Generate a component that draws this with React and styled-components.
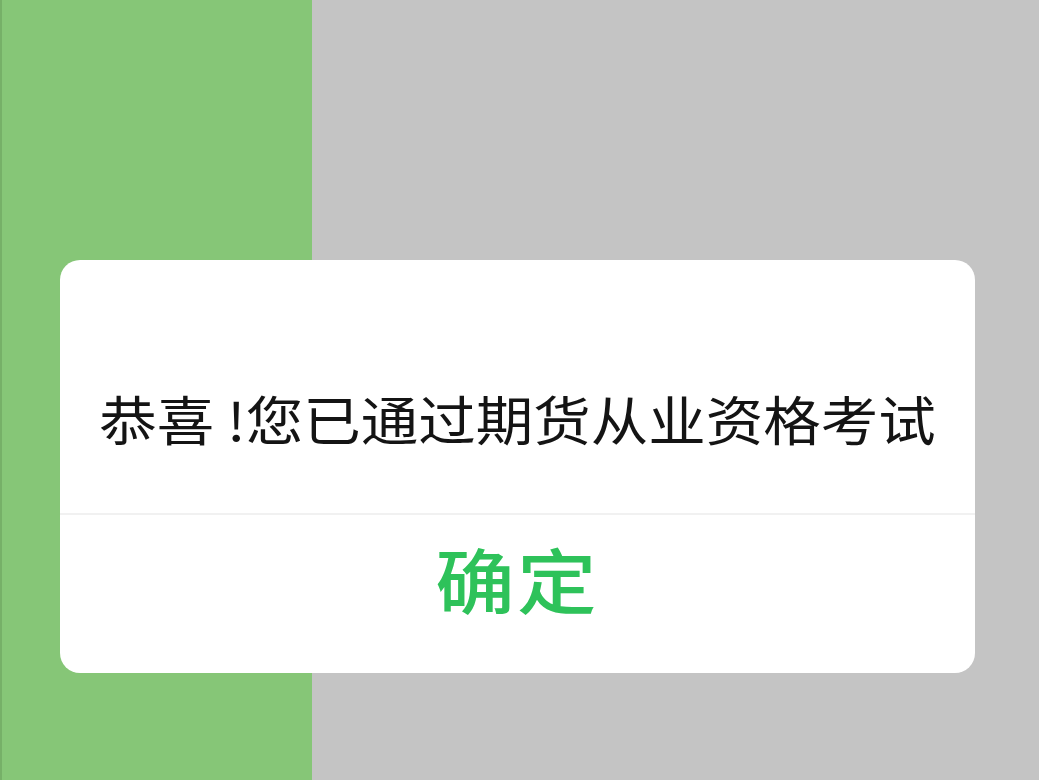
import React from "react";
import styled, { createGlobalStyle } from "styled-components";

const Global = createGlobalStyle`
  html, body { margin: 0; padding: 0; }
  body { font-family: "Noto Sans CJK SC", "Noto Sans", sans-serif; }
`;

const Screen = styled.div`
  position: relative;
  width: 1039px;
  height: 780px;
  display: flex;
  overflow: hidden;
`;

const GreenPane = styled.div`
  width: 312px;
  background: #86c677;
  border-left: 2px solid #76b068;
  box-sizing: border-box;
`;

const GrayPane = styled.div`
  flex: 1;
  background: #c4c4c4;
`;

const Dialog = styled.div`
  position: absolute;
  left: 60px;
  top: 260px;
  width: 915px;
  height: 413px;
  background: #ffffff;
  border-radius: 20px;
  display: flex;
  flex-direction: column;
  overflow: hidden;
`;

const Message = styled.div`
  height: 255px;
  box-sizing: border-box;
  padding-top: 125px;
  border-bottom: 2px solid #f1f1f1;
  display: flex;
  justify-content: center;
  align-items: flex-start;
`;

const Wide = styled.span`
  display: inline-block;
  white-space: nowrap;
  font-size: ${(p) => p.$size}px;
  line-height: 1.25;
  transform: scaleX(${(p) => p.$stretch});
  transform-origin: center;
`;

const MessageText = styled(Wide)`
  color: #141414;
  font-weight: 400;
`;

const Footer = styled.div`
  flex: 1;
  display: flex;
  justify-content: center;
  align-items: flex-start;
  padding-top: 18px;
`;

const Confirm = styled.button`
  border: none;
  background: none;
  padding: 0;
  font-family: "Noto Sans CJK SC", sans-serif;
  color: #2ec25a;
  cursor: pointer;
`;

const ConfirmText = styled(Wide)`
  font-weight: 500;
  letter-spacing: 2px;
`;

export default function App() {
  return (
    <>
      <Global />
      <Screen>
        <GreenPane />
        <GrayPane />
        <Dialog>
          <Message>
            <MessageText $size={53} $stretch={1.085}>
              恭喜 !您已通过期货从业资格考试
            </MessageText>
          </Message>
          <Footer>
            <Confirm>
              <ConfirmText $size={71} $stretch={1.12}>
                确定
              </ConfirmText>
            </Confirm>
          </Footer>
        </Dialog>
      </Screen>
    </>
  );
}
